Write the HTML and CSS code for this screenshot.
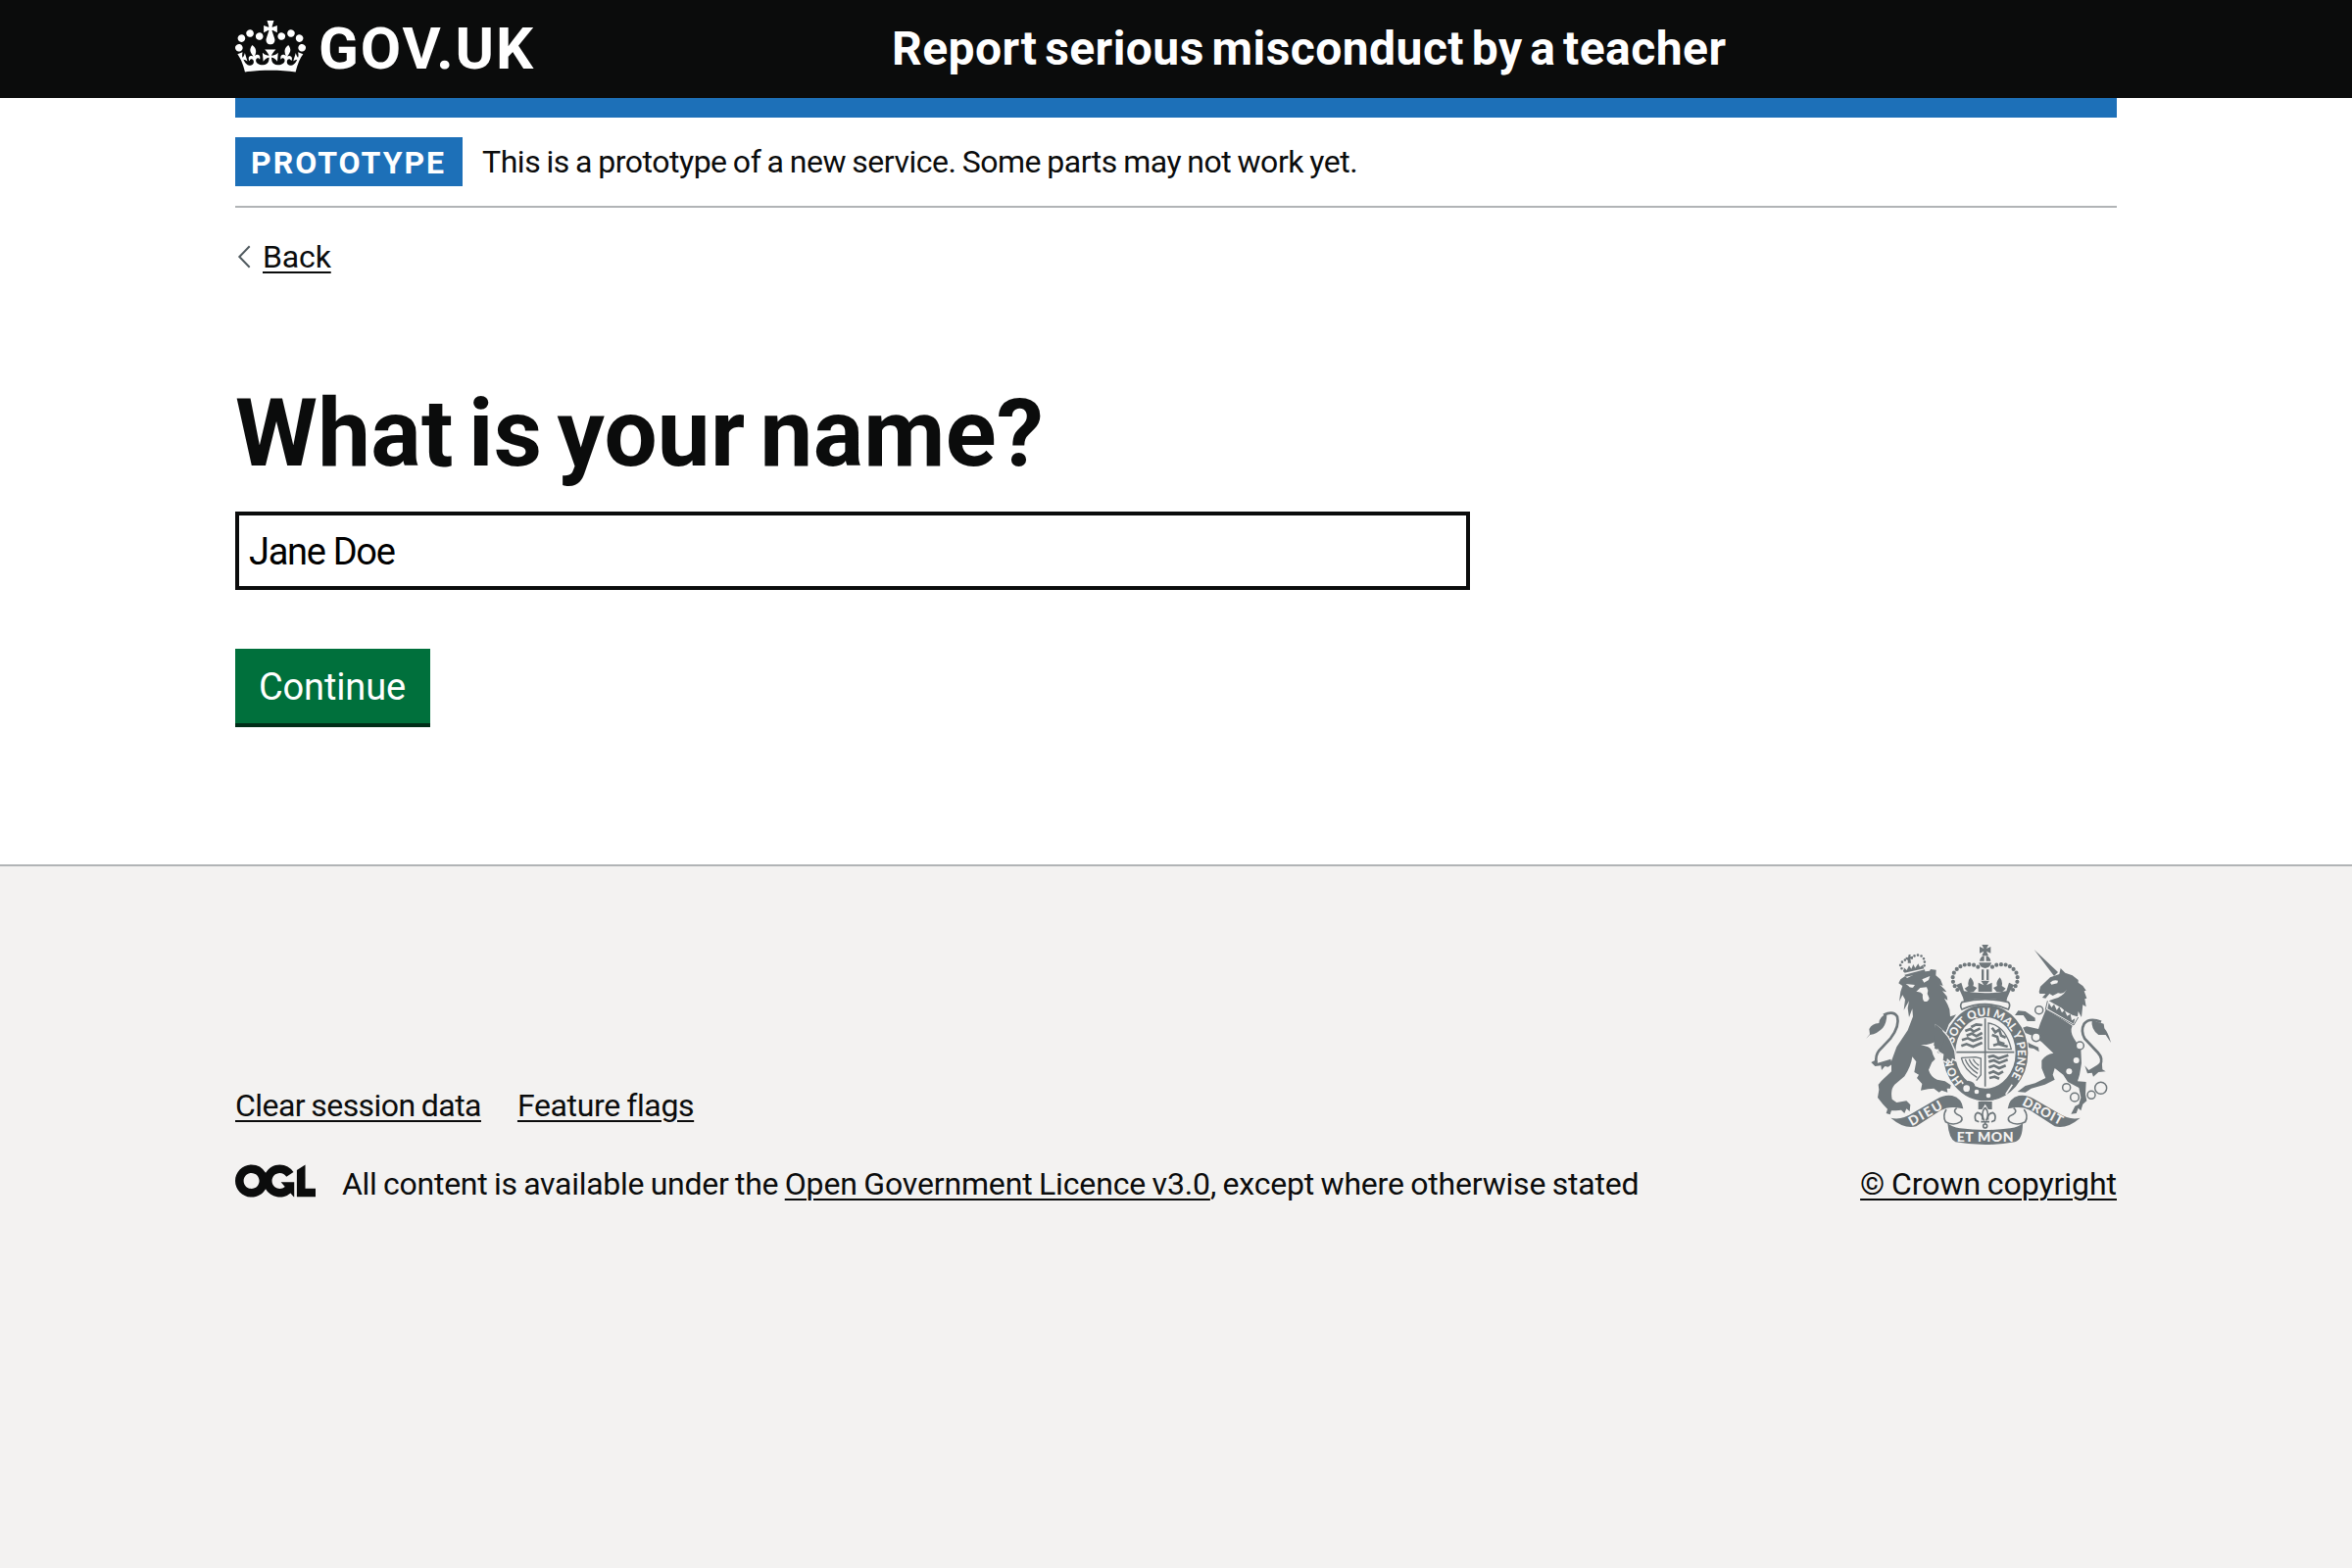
FILE: index.html
```html
<!DOCTYPE html>
<html lang="en">
<head>
<meta charset="utf-8">
<title>What is your name? - Report serious misconduct by a teacher</title>
<link rel="stylesheet" href="styles.css">
</head>
<body>
<header class="header">
  <div class="container header-inner">
    <a class="logo" href="#">
      <svg class="crown" viewBox="0 0 132 97" aria-hidden="true"><path fill="currentColor" fill-rule="evenodd" d="M25 30.2c3.5 1.5 7.7-.2 9.1-3.7 1.5-3.6-.2-7.8-3.9-9.2-3.6-1.4-7.6.3-9.1 3.9-1.4 3.5.3 7.5 3.9 9zM9 39.5c3.6 1.5 7.8-.2 9.2-3.7 1.5-3.6-.2-7.8-3.9-9.1-3.6-1.5-7.6.2-9.1 3.8-1.4 3.5.3 7.5 3.8 9zM4.4 57.2c3.5 1.5 7.7-.2 9.1-3.8 1.5-3.6-.2-7.7-3.9-9.1-3.5-1.5-7.6.3-9.1 3.8-1.4 3.5.3 7.6 3.9 9.1zm38.3-21.4c3.5 1.5 7.7-.2 9.1-3.8 1.5-3.6-.2-7.7-3.9-9.1-3.6-1.5-7.6.3-9.1 3.8-1.3 3.6.4 7.7 3.9 9.1zm64.4-5.6c-3.6 1.5-7.8-.2-9.1-3.7-1.5-3.6.2-7.8 3.8-9.2 3.6-1.4 7.7.3 9.2 3.9 1.3 3.5-.4 7.5-3.9 9zm15.9 9.3c-3.6 1.5-7.7-.2-9.1-3.7-1.5-3.6.2-7.8 3.7-9.1 3.6-1.5 7.7.2 9.2 3.8 1.5 3.5-.3 7.5-3.8 9zm4.7 17.7c-3.6 1.5-7.8-.2-9.2-3.8-1.5-3.6.2-7.7 3.9-9.1 3.6-1.5 7.7.3 9.2 3.8 1.3 3.5-.4 7.6-3.9 9.1zM89.3 35.8c-3.6 1.5-7.8-.2-9.2-3.8-1.4-3.6.2-7.7 3.9-9.1 3.6-1.5 7.7.3 9.2 3.8 1.4 3.6-.3 7.7-3.9 9.1zM69.7 17.7l8.9 4.7V9.3l-8.9 2.8c-.2-.3-.5-.6-.9-.9L72.4 0H59.6l3.5 11.2c-.3.3-.6.5-.9.9l-8.8-2.8v13.1l8.8-4.7c.3.3.6.7.9.9l-5 15.4v.1c-.2.8-.4 1.6-.4 2.4 0 4.1 3.1 7.5 7 8.1h.2c.3 0 .7.1 1 .1.4 0 .7 0 1-.1h.2c4-.6 7.1-4.1 7.1-8.1 0-.8-.1-1.7-.4-2.4V34l-5.1-15.4c.4-.2.7-.6 1-.9zM66 92.8c16.9 0 32.8 1.1 47.1 3.2 4-16.9 8.9-26.7 14-33.5l-9.6-3.4c1 4.9 1.1 7.2 0 10.2-1.5-1.4-3-4.3-4.2-8.7L108.6 76c2.8-2 5-3.2 7.5-3.3-4.4 9.4-10 11.9-13.6 11.2-4.3-.8-6.3-4.6-5.6-7.9 1-4.7 5.7-5.9 8-.5 4.3-8.7-3-11.4-7.6-8.8 7.1-7.2 7.9-13.5 2.1-21.1-8 6.1-8.1 12.3-4.5 20.8-4.7-5.4-12.1-2.5-9.5 6.2 3.4-5.2 7.9-2 7.2 3.1-.6 4.3-6.4 7.8-13.5 7.2-10.3-.9-10.9-8-11.2-13.8 2.5-.5 7.1 1.8 11 7.3L80.2 60c-4.1 4.4-8 5.3-12.3 5.4 1.4-4.4 8-11.6 8-11.6H55.5s6.4 7.2 7.9 11.6c-4.2-.1-8-1-12.3-5.4l1.4 16.4c3.9-5.5 8.5-7.7 10.9-7.3-.3 5.8-.9 12.8-11.1 13.8-7.2.6-12.9-2.9-13.5-7.2-.7-5 3.8-8.3 7.1-3.1 2.7-8.7-4.6-11.6-9.4-6.2 3.7-8.5 3.6-14.7-4.6-20.8-5.8 7.6-5 13.9 2.2 21.1-4.7-2.6-11.9.1-7.7 8.8 2.3-5.5 7.1-4.2 8.1.5.7 3.3-1.3 7.1-5.7 7.9-3.5.7-9-1.8-13.5-11.2 2.5.1 4.7 1.3 7.5 3.3l-4.7-15.4c-1.2 4.4-2.7 7.2-4.3 8.7-1.1-3-.9-5.3 0-10.2l-9.5 3.4c5 6.9 9.9 16.7 14 33.5 14.8-2.1 30.8-3.2 47.7-3.2z"/></svg>
      <span class="logo-text">GOV.UK</span>
    </a>
    <a class="service-name" href="#">Report serious misconduct by a teacher</a>
  </div>
</header>
<div class="container">
  <div class="header-bar"></div>
  <div class="phase-banner">
    <strong class="tag">PROTOTYPE</strong>
    <span class="phase-text">This is a prototype of a new service. Some parts may not work yet.</span>
  </div>
  <a class="back" href="#">
    <svg class="chevron" viewBox="0 0 14 24" aria-hidden="true"><path d="M12.7 1.3 2.3 12l10.4 10.7" fill="none" stroke="currentColor" stroke-width="2"/></svg>
    <span class="link back-text">Back</span>
  </a>
  <main class="main">
    <h1 class="heading"><label for="name">What is your name?</label></h1>
    <input class="input" id="name" type="text" value="Jane Doe">
    <button class="button" type="button">Continue</button>
  </main>
</div>
<footer class="footer">
  <div class="container footer-inner">
    <div class="footer-meta">
      <nav class="footer-links">
        <a class="link link-clear" href="#">Clear session data</a>
        <a class="link link-flags" href="#">Feature flags</a>
      </nav>
      <div class="licence">
        <svg class="ogl" viewBox="0 0 483.2 195.7" aria-hidden="true"><path fill="currentColor" d="M421.5 142.8V.1l-50.7 32.3v161.1h112.4v-50.7zm-122.3-9.6A47.12 47.12 0 0 1 221 97.8c0-26 21.1-47.1 47.1-47.1 16.7 0 31.4 8.7 39.7 21.8l42.7-27.2A97.63 97.63 0 0 0 268.1 0c-36.5 0-68.3 20.1-85.1 49.7A98 98 0 0 0 97.8 0C43.9 0 0 43.9 0 97.8s43.9 97.8 97.8 97.8c36.5 0 68.3-20.1 85.1-49.7a97.76 97.76 0 0 0 149.6 25.4l19.4 22.2h3v-87.8h-80l24.3 27.5zM97.8 145c-26 0-47.1-21.1-47.1-47.1s21.1-47.1 47.1-47.1 47.1 21.1 47.1 47.1S123.8 145 97.8 145"/></svg>
        <span class="licence-text">All content is available under the <a class="link licence-link" href="#">Open Government Licence v3.0</a><span class="licence-tail">, except where otherwise stated</span></span>
      </div>
    </div>
    <a class="copyright" href="#">
      <svg class="crest" viewBox="72 42 750 612" aria-hidden="true">
        <!-- lion -->
        <g class="solid">
          <path d="M172 160L178 148 192 138 198 144Q230 125 267 122L270 117 287 119 286 136 300 148 308 168 298 164 312 178 319 187 306 184 320 200 322 212 312 206 322 225 328 240 330 262 348 256 340 268 326 285 314 318 324 340 340 365 346 396 336 392 334 403 322 392 322 402 308 396 308 378 290 372 293 363 282 360 285 338Q265 350 240 348L262 355Q275 362 277 378L284 392 274 402 264 425Q270 446 290 455L314 460 332 472 330 482 320 482 322 494 304 488 296 494 280 482 262 484 240 488 244 468 228 450 234 440 220 432 226 400 214 385Q210 415 190 445L160 470Q146 485 152 515L166 525 196 520 208 532 206 552 196 544 190 558 180 548 164 550 150 550 146 562 134 558 138 545 124 530 108 510 112 486 110 470 120 458 150 430 150 398 166 355 200 304 216 262 214 238 204 264 200 236 204 214 188 242 192 210 184 196 174 216 178 186 184 168Z"/>
          <path d="M72 330L84 316 82 300Q90 284 112 282Q112 262 136 254Q136 280 124 296Q108 314 84 318Z"/>
          <path d="M88 402L104 394 108 404 148 392 152 408 140 416 130 414 120 426 118 412 100 414Z"/>
          <path d="M190 134L252 118 254 128 194 140ZM190 128L188 112 197 120 204 106 211 116 217 102 223 113 232 100 237 110 246 104 250 115Z"/>
        </g>
        <path class="line" stroke-width="8" d="M126 257Q156 242 168 262Q176 290 148 328L112 366Q100 382 104 402"/>
        <path class="beads beads-small" stroke-width="8" d="M190 122Q172 110 180 98Q192 84 206 88Q224 68 241 76Q256 86 250 110"/>
        <path class="solid" d="M203 72h6l-1 7 8-2v9l-8-2 2 14h-10l1-12-7 2v-8l7 1Z"/>
        <g class="bg">
          <path d="M194 162L222 165 216 173Q205 175 202 168ZM244 148L268 138 264 150 250 158ZM226 186L238 174 258 172 262 182 260 192 266 206Q262 218 252 216Q244 212 246 194Q240 184 226 186Z"/>
        </g>

        <!-- unicorn -->
        <g class="solid">
          <path d="M587 57L660 126 648 138Z"/>
          <path d="M602 186L606 170 636 142 664 132 668 114 682 128 704 136 722 150 722 158 736 168 746 182 740 184 748 206 742 208 746 232 736 226 732 264 722 246 720 262 690 254 672 236 632 214 648 208Q680 200 690 172Q682 196 660 190L644 198 634 192 622 206 612 204 622 192 604 192Z"/>
          <path d="M624 238L704 290Q696 306 708 328L730 362 732 404 726 440 720 460 746 462 744 500 748 520 736 530 730 550 722 542 716 558 700 560 712 536 724 530 730 510 724 480 690 462 676 440 650 420 644 440 650 455 620 470 578 482 560 494 536 492 560 474 590 466 622 450 610 420 610 396Q624 376 646 374L610 340 584 322 560 312 560 336 576 346 600 356 602 370 586 360 572 358 546 330 542 300 564 292 600 300 606 282Z"/>
          <path d="M528 258L538 244 560 246 590 266 590 276 566 276 554 258Z"/>
          <path d="M822 342L806 318 784 318Q760 300 764 272Q780 278 800 284L802 298Q814 312 822 342Z"/>
          <path d="M742 412L754 426 780 410 794 398 796 424 806 430 784 432 768 446 764 434 750 436Z"/>
        </g>
        <path class="line" stroke-width="8" d="M792 278Q756 264 740 284Q728 306 742 330L782 372Q800 392 788 412"/>
        <g class="bg"><path d="M636 158Q646 148 660 152L658 160 640 164ZM626 214L722 268 708 290 622 240Z"/><circle cx="716" cy="396" r="9"/><circle cx="694" cy="430" r="9"/></g>
        <path class="line" stroke-width="3" d="M628 214L622 240 708 288 722 264"/>
        <path class="solid" d="M628 238L632 220 640 234 648 224 656 242 664 232 672 250 680 242 688 260 698 254 702 274 712 268 708 284Z"/>
        <g class="chain" stroke-width="4.5"><circle cx="602" cy="242" r="12"/><circle cx="593" cy="325" r="13"/><circle cx="727" cy="351" r="12"/><circle cx="686" cy="479" r="12"/><circle cx="711" cy="509" r="13"/><circle cx="762" cy="502" r="12"/><circle cx="791" cy="481" r="18"/></g>

        <!-- garter and shield -->
        <ellipse class="gap" stroke-width="46" cx="438" cy="372" rx="110" ry="128"/>
        <ellipse class="line" stroke-width="38" cx="438" cy="373" rx="111" ry="128"/>
        <path class="gap" stroke-width="5" d="M366 462L384 492 400 480M520 470L500 500"/>
        <path class="solid" d="M362 488Q360 468 384 458Q408 462 406 478Q450 496 500 496Q470 524 430 518Q400 512 390 500Z"/>
        <g class="bg"><circle cx="411" cy="492" r="7"/><circle cx="447" cy="504" r="7"/><circle cx="380" cy="482" r="10"/></g>
        <path id="garter" fill="none" d="M370 463A100 116 0 1 1 508 458"/>
        <text class="motto" font-size="35"><textPath href="#garter" startOffset="2">HON<tspan dx="42">SOIT QUI MAL Y PENSE</tspan></textPath></text>
        <g class="line" stroke-width="5"><path d="M437 268V476M349 371H526"/><path stroke-width="4" d="M447 362V282Q500 290 517 362Z"/></g>
        <g class="line" stroke-width="8">
          <path d="M376 306L392 300 402 308 422 298M380 320L396 314 410 322 428 312M366 334L384 328 400 336 428 326M364 352L380 346 400 354 428 342M394 294L410 286 428 288"/>
          <path d="M458 296L468 310 480 302 486 320 500 326M458 318L474 324 478 340 496 346M462 350L476 346 506 354"/>
          <path d="M446 386L462 382 478 390 508 380M448 400L464 396 480 404 506 394M448 418L464 412 480 420 500 412M448 436L462 430 478 438 492 430M450 450L466 446 480 452"/>
        </g>
        <g class="line" stroke-width="4"><path d="M364 388L408 386 424 390V440L410 458M364 388Q372 424 412 448M376 392Q384 416 414 436M388 392Q394 410 416 424M400 392Q404 402 418 412"/></g>
        <path class="paw" stroke-width="4" d="M286 288Q318 310 330 334L344 366 348 398 337 392 334 404 322 394 320 404 306 396 308 378 294 370Z"/>
        <path class="solid" d="M284 284L306 302 312 330 300 368 280 350Z"/>
        <path class="solid" d="M416 522H458V546H416Z"/>
        <path class="bg" d="M437 530L448 548H426Z"/>
        <path class="line" stroke-width="5" d="M437 540Q422 558 434 580M437 540Q452 558 440 580M428 578Q432 560 414 556Q402 562 408 580L418 584M446 578Q442 560 460 556Q472 562 466 580L456 584M424 584H450M437 584V592"/>
        <circle class="line" stroke-width="5" cx="437" cy="597" r="6"/>

        <!-- crown -->
        <g class="beads" stroke-width="12.5"><path d="M352 180Q330 154 342 127Q362 96 402 104L424 114"/><path d="M522 180Q544 154 532 127Q512 96 472 104L450 114"/></g>
        <g class="solid">
          <path d="M427 42H447L441 54 454 48V68L441 62 447 76H427L433 62 420 68V48L433 54Z"/>
          <path d="M420 92Q422 78 434 76V92ZM454 92Q452 78 440 76V92ZM418 97H456Q454 112 437 114Q420 112 418 97ZM426 118H433V150H426ZM441 118H448V150H441Z"/>
          <path d="M424 152H450L441 166 458 158V186H416V158L433 166ZM392 142Q406 158 400 168L412 174 402 186H384L374 176 386 168Q382 154 392 142ZM482 142Q468 158 474 168L462 174 472 186H490L500 176 488 168Q492 154 482 142Z"/>
          <path d="M348 166L364 158 372 184Q437 196 502 184L510 158 526 166Q506 190 502 216Q437 198 372 216Q368 190 348 166Z"/>
        </g>
        <path class="ermine" stroke-width="5" d="M366 218Q437 200 508 218Q516 226 508 240Q437 208 366 240Q358 228 366 218Z"/>

        <!-- scroll -->
        <g class="solid">
          <path d="M148 572Q180 580 214 558L290 514Q312 500 336 504Q366 512 370 544L344 540Q320 538 300 550L226 598Q190 608 148 572Z"/>
          <path d="M728 572Q696 580 662 558L586 514Q564 500 540 504Q510 512 506 544L532 540Q556 538 576 550L650 598Q686 608 728 572Z"/>
          <path d="M322 588Q334 600 360 604Q437 614 514 604Q542 600 552 588Q552 640 528 646Q437 662 346 646Q326 636 322 588Z"/>
        </g>
        <g class="line" stroke-width="5"><path d="M318 546Q306 566 316 584Q340 598 362 584Q374 570 352 562Q336 552 350 542"/><path d="M556 546Q570 566 560 584Q534 598 512 584Q500 570 522 562Q538 552 524 542"/></g>
        <path id="scroll-left" fill="none" d="M212 598L318 537"/>
        <path id="scroll-right" fill="none" d="M548 532L676 600"/>
        <text class="motto" font-size="40"><textPath href="#scroll-left" textLength="112">DIEU</textPath></text>
        <text class="motto" font-size="40"><textPath href="#scroll-right" textLength="134">DROIT</textPath></text>
        <text class="motto" font-size="42" x="350" y="644" textLength="174">ET MON</text>
      </svg>
      <span class="link copyright-text">© Crown copyright</span>
    </a>
  </div>
</footer>
</body>
</html>
```
FILE: styles.css
```css
* { box-sizing: border-box; }

html { background: #f3f2f1; }

body {
  margin: 0;
  background: #fff;
  color: #0b0c0c;
  font-family: Roboto, "Liberation Sans", sans-serif;
  font-size: 32px;
  line-height: 40px;
}

a { color: inherit; text-decoration: none; }

.link {
  text-decoration: underline;
  text-decoration-thickness: 2px;
  text-underline-offset: 4px;
}

.container { width: 1920px; margin: 0 auto; }

/* Header */
.header { background: #0b0c0c; color: #fff; }
.header-inner { display: flex; height: 100px; padding-top: 20px; }
.logo { display: flex; width: 670px; gap: 13px; }
.crown { width: 72px; height: 53px; margin-top: 1px; }
.logo-text { font-size: 60px; line-height: 60px; font-weight: 700; letter-spacing: 1.9px; }
.service-name { font-size: 48px; line-height: 60px; font-weight: 700; letter-spacing: .45px; word-spacing: -4.7px; }
.header-bar { height: 20px; background: #1d70b8; }

/* Phase banner */
.phase-banner { display: flex; gap: 20px; padding: 20px 0; border-bottom: 2px solid #b1b4b6; }
.tag { padding: 2px 17px 0 16px; background: #1d70b8; color: #fff; line-height: 48px; letter-spacing: 2px; }
.phase-text { line-height: 50px; letter-spacing: -.48px; word-spacing: -1.2px; }

/* Back link */
.back { display: flex; width: max-content; margin-top: 30px; padding-left: 2px; gap: 12px; }
.chevron { width: 14px; height: 24px; margin-top: 8px; color: #505a5f; }
.back-text { letter-spacing: -.15px; }

/* Question */
.main { display: flex; flex-direction: column; align-items: flex-start; padding: 110px 0 144px; }
.heading { margin: 0 0 30px; font-size: 96px; line-height: 100px; font-weight: 700; letter-spacing: .3px; word-spacing: -9px; }
.input {
  width: 1260px;
  height: 80px;
  padding: 12px 10px 10px;
  border: 4px solid #0b0c0c;
  border-radius: 0;
  background: #fff;
  color: #000;
  font: 38px Roboto, "Liberation Sans", sans-serif;
  letter-spacing: -1.3px;
}
.button {
  width: 199px;
  height: 76px;
  margin-top: 60px;
  padding: 1px 0 0 24px;
  border: 0;
  background: #00703c;
  box-shadow: 0 4px 0 #002d18;
  color: #fff;
  font: 38px Roboto, "Liberation Sans", sans-serif;
  letter-spacing: -.15px;
  text-align: left;
}

/* Footer */
.footer { background: #f3f2f1; border-top: 2px solid #b1b4b6; }
.footer-inner { display: flex; justify-content: space-between; align-items: flex-end; padding: 80px 0 368px; }
.footer-links { display: flex; gap: 37px; margin-bottom: 40px; }
.link-clear { letter-spacing: -.55px; word-spacing: -1.2px; }
.link-flags { letter-spacing: -.36px; word-spacing: -1.2px; }
.licence { display: flex; gap: 27px; }
.ogl { width: 82px; height: 34px; }
.licence-text { letter-spacing: -.27px; word-spacing: -1.2px; }
.licence-link { letter-spacing: -.16px; }
.licence-tail { letter-spacing: -.2px; }
.copyright { display: flex; flex-direction: column; align-items: center; gap: 20px; }
.copyright-text { letter-spacing: -.04px; word-spacing: -1.2px; }

/* Royal coat of arms */
.crest { width: 250px; height: 204px; }
.solid { fill: #6f777b; }
.bg { fill: #f3f2f1; }
.line { fill: none; stroke: #6f777b; }
.gap { fill: none; stroke: #f3f2f1; }
.chain, .ermine { fill: #f3f2f1; stroke: #6f777b; }
.paw { fill: #6f777b; stroke: #f3f2f1; }
.beads { fill: none; stroke: #6f777b; stroke-linecap: round; stroke-dasharray: 0 14; }
.beads-small { stroke-dasharray: 0 11; }
.motto { fill: #f3f2f1; font-family: Lato, "Liberation Sans", sans-serif; font-weight: 900; }
```
